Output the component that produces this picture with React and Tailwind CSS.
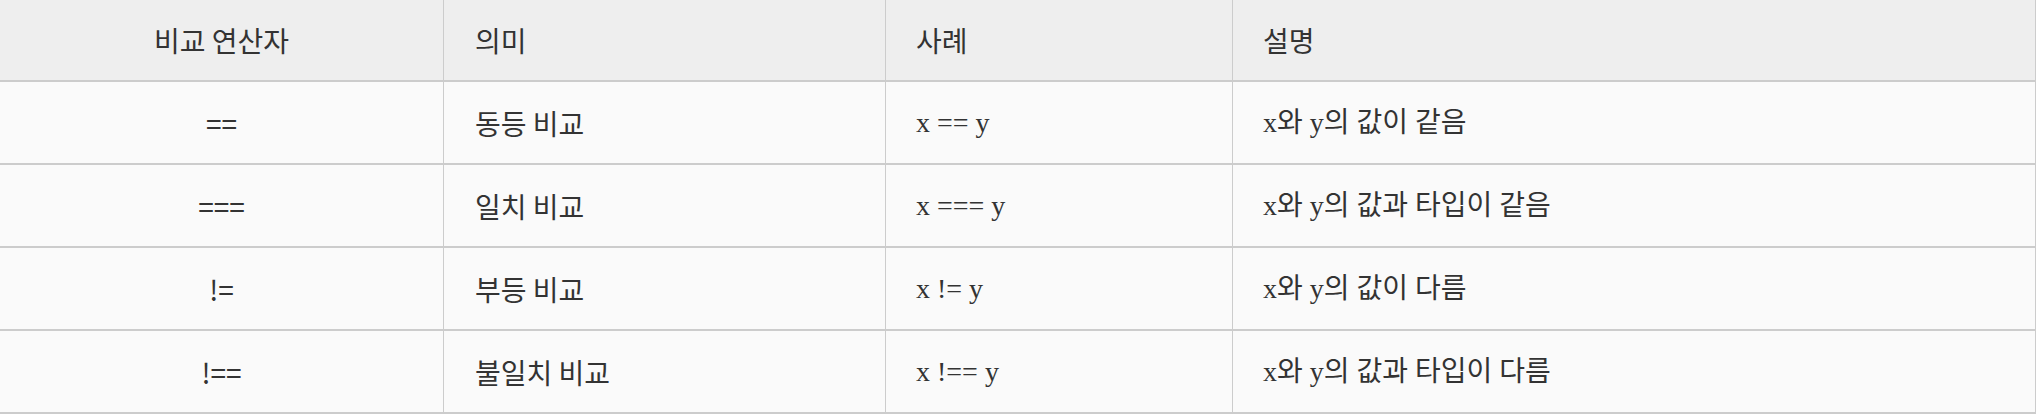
import React from "react";

const rows = [
  ["==", "동등 비교", "x == y", "x와 y의 값이 같음"],
  ["===", "일치 비교", "x === y", "x와 y의 값과 타입이 같음"],
  ["!=", "부등 비교", "x != y", "x와 y의 값이 다름"],
  ["!==", "불일치 비교", "x !== y", "x와 y의 값과 타입이 다름"],
];

const sans = "font-['Noto_Sans_CJK_KR',sans-serif]";
const serif = "font-['Liberation_Serif','Noto_Sans_CJK_KR',serif]";

export default function App() {
  return (
    <div className="w-[2036px] h-[414px] bg-[#fafafa] text-[#333333] text-[28px] leading-none overflow-hidden">
      <div className="grid grid-cols-[444px_442px_347px_803px] h-[82px] bg-[#eeeeee] border-b-2 border-[#cccccc]">
        <div className={`flex items-center justify-center border-r border-[#cccccc] ${sans}`}>비교 연산자</div>
        <div className={`flex items-center pl-[31px] border-r border-[#cccccc] ${sans}`}>의미</div>
        <div className={`flex items-center pl-[30px] border-r border-[#cccccc] ${sans}`}>사례</div>
        <div className={`flex items-center pl-[30px] border-r border-[#cccccc] ${sans}`}>설명</div>
      </div>
      {rows.map((r, i) => (
        <div key={i} className="grid grid-cols-[444px_442px_347px_803px] h-[83px] border-b-2 border-[#cccccc]">
          <div className={`flex items-center justify-center border-r border-[#cccccc] ${sans}`}>{r[0]}</div>
          <div className={`flex items-center pl-[31px] border-r border-[#cccccc] ${sans}`}>{r[1]}</div>
          <div className={`flex items-center pl-[30px] border-r border-[#cccccc] whitespace-pre ${serif}`}>{r[2]}</div>
          <div className={`flex items-center pl-[30px] border-r border-[#cccccc] whitespace-pre ${serif}`}>{r[3]}</div>
        </div>
      ))}
    </div>
  );
}
